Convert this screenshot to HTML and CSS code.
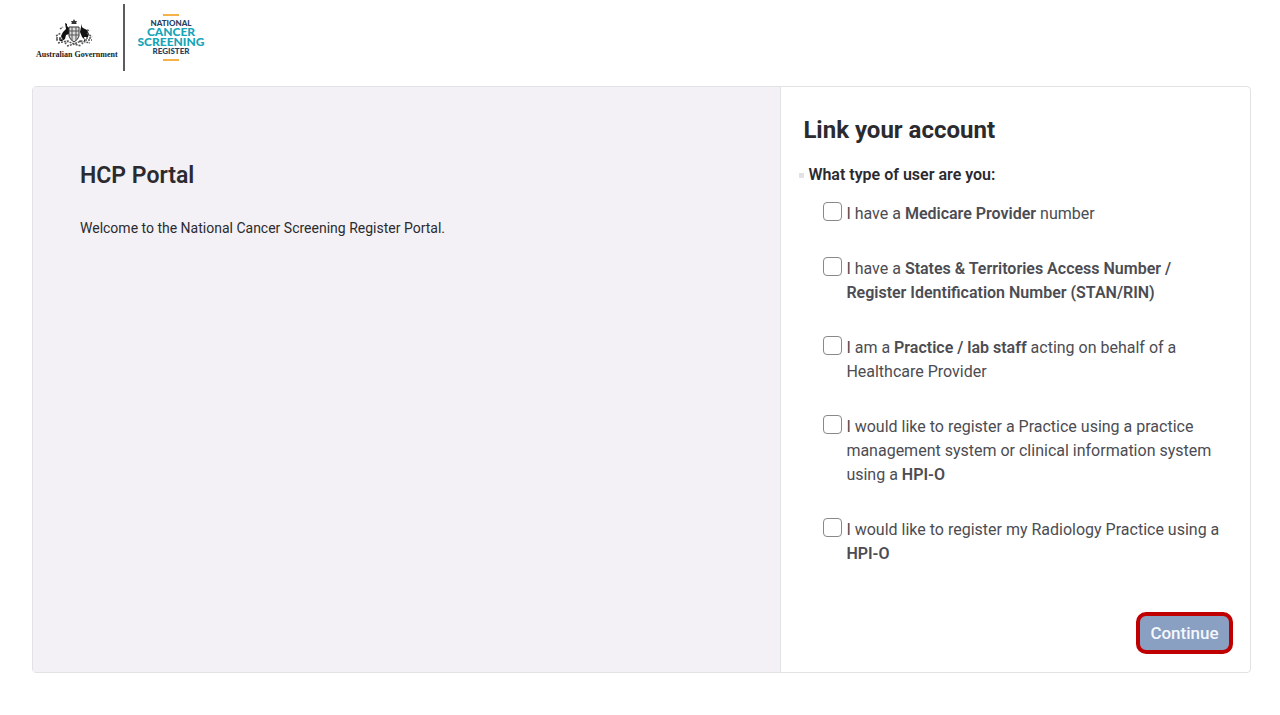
FILE: index.html
```html
<!DOCTYPE html>
<html lang="en">
<head>
<meta charset="utf-8">
<title>HCP Portal</title>
<meta name="viewport" content="width=device-width, initial-scale=1">
<link rel="stylesheet" href="styles.css">
</head>
<body>
<header class="header">
  <div class="gov">
    <svg class="crest" viewBox="0 0 38 29" aria-hidden="true">
      <path fill="#333" d="M19 0l1 2 2 0-1 2 1 1h-6l1-1-1-2 2 0z"/>
      <path fill="#111" d="M10 4l2 1 0 2 2 2 0 6-3 1-1 4-3 2-3 0 3-2-1-3 2-4 3-3z"/>
      <path fill="#111" d="M27 5l-1 3-1 5 2 5 2 2 0 2 1 0-1-4 4 0 1-3-2-4-4-2-1-1z"/>
      <path fill="#ddd" stroke="#333" stroke-width="1" d="M14 8h10v9q-1 4-5 6q-4-2-5-6z"/>
      <path fill="none" stroke="#555" stroke-width="1" d="M14 12h10M14 16h10M17 8v13M21 8v13"/>
      <path fill="none" stroke="#555" stroke-width="1.5" stroke-dasharray="2 1" d="M1 17l5-3M1 21l7-1M3 24l9-2 7 3 7-3 9 2M32 14l5 4M30 21l7 0M5 10l3-2M32 11l3 1M12 27l7-2 7 2M10 25l4-4M28 25l-4-4M1 19h6M31 19h6"/>
    </svg>
    <span class="gov-name">Australian Government</span>
  </div>
  <svg class="ncsr" viewBox="0 0 68 52" role="img" aria-label="National Cancer Screening Register">
    <path d="M25 3h16M25 48h16" stroke="#f5b24b" stroke-width="2"/>
    <text class="navy" x="33" y="14">NATIONAL</text>
    <text class="teal" x="33" y="24">CANCER</text>
    <text class="teal" x="33" y="34">SCREENING</text>
    <text class="navy" x="33" y="42">REGISTER</text>
  </svg>
</header>
<main class="card">
  <section class="intro">
    <h1 class="title">HCP Portal</h1>
    <p class="welcome">Welcome to the National Cancer Screening Register Portal.</p>
  </section>
  <form class="link-form">
    <h2 class="title">Link your account</h2>
    <fieldset class="types">
      <legend class="question">What type of user are you:</legend>
      <div class="options">
        <label class="option"><input type="checkbox" class="box"><span>I have a <b>Medicare Provider</b> number</span></label>
        <label class="option"><input type="checkbox" class="box"><span>I have a <b>States &amp; Territories Access Number / Register Identification Number (STAN/RIN)</b></span></label>
        <label class="option"><input type="checkbox" class="box"><span>I am a <b>Practice / lab staff</b> acting on behalf of a Healthcare Provider</span></label>
        <label class="option"><input type="checkbox" class="box"><span>I would like to register a Practice using a practice management system or clinical information system using a <b>HPI-O</b></span></label>
        <label class="option"><input type="checkbox" class="box"><span>I would like to register my Radiology Practice using a <b>HPI-O</b></span></label>
      </div>
    </fieldset>
    <button type="button" class="continue">Continue</button>
  </form>
</main>
</body>
</html>
```
FILE: styles.css
```css
* { box-sizing: border-box; }
body {
  margin: 0;
  padding: 0 29px 40px 32px;
  background: #fff;
  color: #2b2b2f;
  font-family: Roboto, "Liberation Sans", sans-serif;
}
.header {
  display: flex;
  align-items: flex-start;
  gap: 13px;
  padding: 4px 0 15px 4px;
}
.gov {
  display: flex;
  flex-direction: column;
  align-items: flex-start;
  height: 67px;
  padding: 15px 5px 0 0;
  border-right: 2px solid #5c5c5e;
}
.crest { width: 38px; height: 29px; margin-left: 19px; }
.gov-name {
  color: #222;
  font: bold 8px/14px "Liberation Serif", serif;
  white-space: nowrap;
}
.ncsr { width: 68px; height: 52px; margin-top: 8px; }
.ncsr text {
  font-family: Lato, sans-serif;
  font-weight: 900;
  text-anchor: middle;
}
.navy { fill: #27405f; font-size: 8px; }
.teal { fill: #18a5b8; font-size: 12px; }
.card {
  display: grid;
  grid-template-columns: 749fr 469fr;
  min-height: 587px;
  border: 1px solid #e2e2e5;
  border-radius: 4px;
}
.intro {
  padding: 73px 47px;
  background: #f3f1f5;
  border-right: 1px solid #e2e2e5;
}
.title {
  margin: 0;
  font-size: 24px;
  font-weight: 700;
  line-height: 32px;
}
.intro .title { font-size: 23px; font-weight: 600; }
.welcome {
  margin: 24px 0 0;
  font-size: 14px;
  line-height: 24px;
}
.link-form {
  display: flex;
  flex-direction: column;
  padding: 27px 17px 18px 22px;
}
.types {
  min-width: 0;
  margin: 17px 0 0;
  padding: 0;
  border: 0;
}
.question {
  display: flex;
  align-items: center;
  gap: 4px;
  margin-left: -4px;
  padding: 0;
  font-size: 16px;
  font-weight: 600;
  line-height: 24px;
}
.question::before {
  content: "";
  width: 5px;
  height: 5px;
  background: #e2e2e5;
}
.options {
  display: flex;
  flex-direction: column;
  gap: 31px;
  padding: 15px 0 0 20px;
}
.option {
  display: flex;
  gap: 4px;
  color: #4c4c52;
  font-size: 16px;
  line-height: 24px;
}
.option b { font-weight: 600; }
.box {
  flex: none;
  appearance: none;
  width: 19px;
  height: 19px;
  margin: 0;
  border: 1px solid #88888d;
  border-radius: 4px;
  background: #fff;
}
.box:checked { background: #8aa0c2; }
.continue {
  align-self: flex-end;
  margin-top: auto;
  width: 97px;
  height: 42px;
  padding: 0;
  border: 4px solid #c00000;
  border-radius: 10px;
  background: #8aa0c2;
  color: #f4f7fc;
  font: 500 17px/24px Roboto, "Liberation Sans", sans-serif;
}
```
